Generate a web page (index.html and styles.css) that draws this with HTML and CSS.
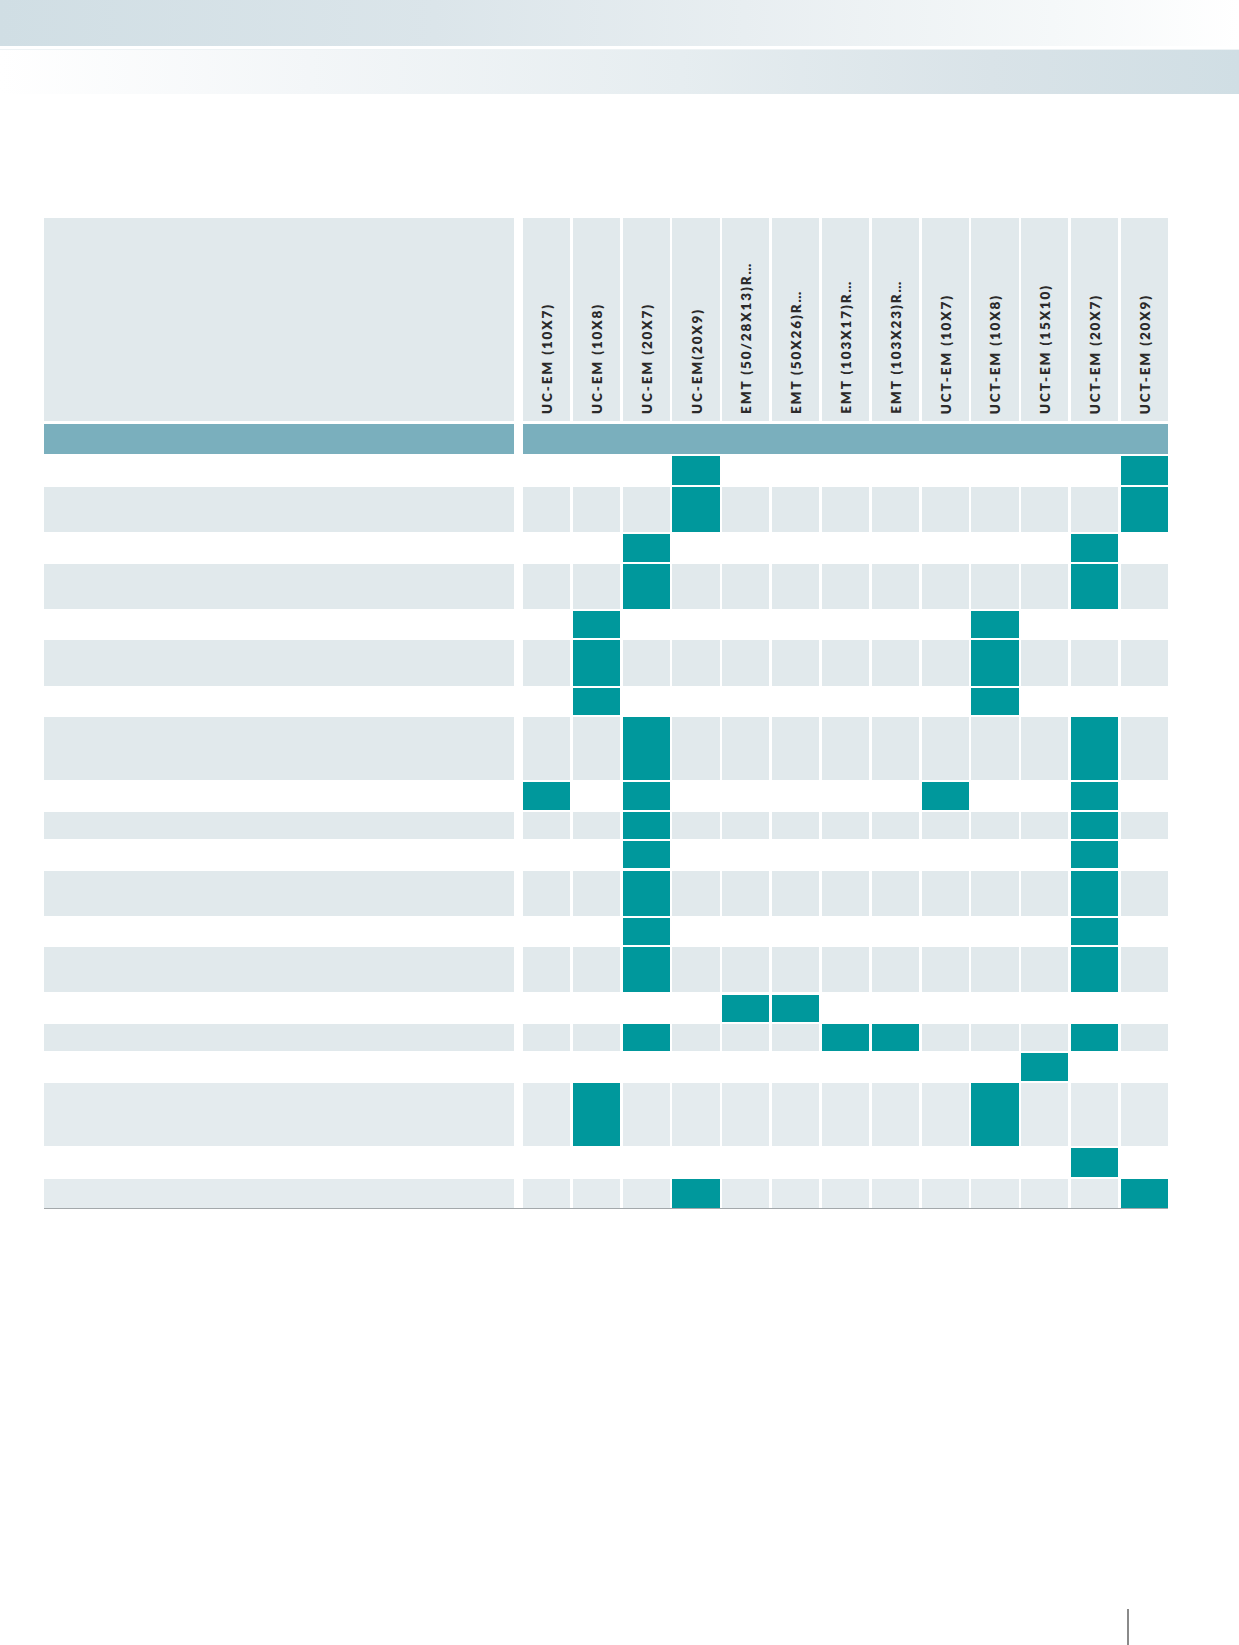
FILE: index.html
```html
<!DOCTYPE html>
<html lang="en">
<head>
<meta charset="utf-8">
<title>Matrix</title>
<link rel="stylesheet" href="styles.css">
</head>
<body>
<div class="banner">
  <div class="bar bar-a"></div>
  <div class="bar bar-b"></div>
</div>

<div class="matrix">
  <div class="row head">
    <div class="label"></div>
    <div class="cells">
      <div class="hc"><span>UC-EM (10X7)</span></div>
      <div class="hc"><span>UC-EM (10X8)</span></div>
      <div class="hc"><span>UC-EM (20X7)</span></div>
      <div class="hc"><span>UC-EM(20X9)</span></div>
      <div class="hc"><span>EMT (50/28X13)R…</span></div>
      <div class="hc"><span>EMT (50X26)R…</span></div>
      <div class="hc"><span>EMT (103X17)R…</span></div>
      <div class="hc"><span>EMT (103X23)R…</span></div>
      <div class="hc"><span>UCT-EM (10X7)</span></div>
      <div class="hc"><span>UCT-EM (10X8)</span></div>
      <div class="hc"><span>UCT-EM (15X10)</span></div>
      <div class="hc"><span>UCT-EM (20X7)</span></div>
      <div class="hc"><span>UCT-EM (20X9)</span></div>
    </div>
  </div>

  <div class="row band">
    <div class="label"></div>
    <div class="cells"></div>
  </div>

  <div class="body">
    <!-- 1 -->
    <div class="row sl">
      <div class="label"></div>
      <div class="cells"><i></i><i></i><i></i><i class="on"></i><i></i><i></i><i></i><i></i><i></i><i></i><i></i><i></i><i class="on"></i></div>
    </div>
    <!-- 2 -->
    <div class="row alt d">
      <div class="label"></div>
      <div class="cells"><i></i><i></i><i></i><i class="on"></i><i></i><i></i><i></i><i></i><i></i><i></i><i></i><i></i><i class="on"></i></div>
    </div>
    <!-- 3 -->
    <div class="row s">
      <div class="label"></div>
      <div class="cells"><i></i><i></i><i class="on"></i><i></i><i></i><i></i><i></i><i></i><i></i><i></i><i></i><i class="on"></i><i></i></div>
    </div>
    <!-- 4 -->
    <div class="row alt d">
      <div class="label"></div>
      <div class="cells"><i></i><i></i><i class="on"></i><i></i><i></i><i></i><i></i><i></i><i></i><i></i><i></i><i class="on"></i><i></i></div>
    </div>
    <!-- 5 -->
    <div class="row s">
      <div class="label"></div>
      <div class="cells"><i></i><i class="on"></i><i></i><i></i><i></i><i></i><i></i><i></i><i></i><i class="on"></i><i></i><i></i><i></i></div>
    </div>
    <!-- 6 -->
    <div class="row alt d">
      <div class="label"></div>
      <div class="cells"><i></i><i class="on"></i><i></i><i></i><i></i><i></i><i></i><i></i><i></i><i class="on"></i><i></i><i></i><i></i></div>
    </div>
    <!-- 7 -->
    <div class="row s">
      <div class="label"></div>
      <div class="cells"><i></i><i class="on"></i><i></i><i></i><i></i><i></i><i></i><i></i><i></i><i class="on"></i><i></i><i></i><i></i></div>
    </div>
    <!-- 8 -->
    <div class="row alt t">
      <div class="label"></div>
      <div class="cells"><i></i><i></i><i class="on"></i><i></i><i></i><i></i><i></i><i></i><i></i><i></i><i></i><i class="on"></i><i></i></div>
    </div>
    <!-- 9 -->
    <div class="row s">
      <div class="label"></div>
      <div class="cells"><i class="on"></i><i></i><i class="on"></i><i></i><i></i><i></i><i></i><i></i><i class="on"></i><i></i><i></i><i class="on"></i><i></i></div>
    </div>
    <!-- 10 -->
    <div class="row alt s">
      <div class="label"></div>
      <div class="cells"><i></i><i></i><i class="on"></i><i></i><i></i><i></i><i></i><i></i><i></i><i></i><i></i><i class="on"></i><i></i></div>
    </div>
    <!-- 11 -->
    <div class="row s">
      <div class="label"></div>
      <div class="cells"><i></i><i></i><i class="on"></i><i></i><i></i><i></i><i></i><i></i><i></i><i></i><i></i><i class="on"></i><i></i></div>
    </div>
    <!-- 12 -->
    <div class="row alt d">
      <div class="label"></div>
      <div class="cells"><i></i><i></i><i class="on"></i><i></i><i></i><i></i><i></i><i></i><i></i><i></i><i></i><i class="on"></i><i></i></div>
    </div>
    <!-- 13 -->
    <div class="row s">
      <div class="label"></div>
      <div class="cells"><i></i><i></i><i class="on"></i><i></i><i></i><i></i><i></i><i></i><i></i><i></i><i></i><i class="on"></i><i></i></div>
    </div>
    <!-- 14 -->
    <div class="row alt d">
      <div class="label"></div>
      <div class="cells"><i></i><i></i><i class="on"></i><i></i><i></i><i></i><i></i><i></i><i></i><i></i><i></i><i class="on"></i><i></i></div>
    </div>
    <!-- 15 -->
    <div class="row s">
      <div class="label"></div>
      <div class="cells"><i></i><i></i><i></i><i></i><i class="on"></i><i class="on"></i><i></i><i></i><i></i><i></i><i></i><i></i><i></i></div>
    </div>
    <!-- 16 -->
    <div class="row alt s">
      <div class="label"></div>
      <div class="cells"><i></i><i></i><i class="on"></i><i></i><i></i><i></i><i class="on"></i><i class="on"></i><i></i><i></i><i></i><i class="on"></i><i></i></div>
    </div>
    <!-- 17 -->
    <div class="row s">
      <div class="label"></div>
      <div class="cells"><i></i><i></i><i></i><i></i><i></i><i></i><i></i><i></i><i></i><i></i><i class="on"></i><i></i><i></i></div>
    </div>
    <!-- 18 -->
    <div class="row alt light t">
      <div class="label"></div>
      <div class="cells"><i></i><i class="on"></i><i></i><i></i><i></i><i></i><i></i><i></i><i></i><i class="on"></i><i></i><i></i><i></i></div>
    </div>
    <!-- 19 -->
    <div class="row sl">
      <div class="label"></div>
      <div class="cells"><i></i><i></i><i></i><i></i><i></i><i></i><i></i><i></i><i></i><i></i><i></i><i class="on"></i><i></i></div>
    </div>
    <!-- 20 -->
    <div class="row alt light sl">
      <div class="label"></div>
      <div class="cells"><i></i><i></i><i></i><i class="on"></i><i></i><i></i><i></i><i></i><i></i><i></i><i></i><i></i><i class="on"></i></div>
    </div>
  </div>
</div>

<div class="page-mark"></div>
</body>
</html>
```

FILE: styles.css
```css
* { box-sizing: border-box; }

html, body {
  margin: 0;
  padding: 0;
  background: #ffffff;
  font-family: Lato, "Open Sans", "DejaVu Sans", sans-serif;
}

body {
  width: 1239px;
  height: 1645px;
  overflow: hidden;
}

.banner {
  display: flex;
  flex-direction: column;
  gap: 3px;
}

.bar {
  height: 46px;
}

.bar-a {
  background: linear-gradient(to right, #d0dee4 0%, #dbe5ea 35%, #e8eef1 60%, #f5f8f9 85%, #ffffff 100%);
}

.bar-b {
  height: 45px;
  border-top: 1px solid #eef3f5;
  background: linear-gradient(to right, #ffffff 0%, #f3f6f8 25%, #e6edf0 55%, #d9e3e8 80%, #d0dee4 100%);
}

.matrix {
  margin: 124px 0 0 44px;
  width: 1124px;
  display: flex;
  flex-direction: column;
}

.row {
  display: flex;
  gap: 9px;
}

.label {
  width: 470px;
  flex: none;
}

.cells {
  width: 645px;
  flex: none;
  display: grid;
  grid-template-columns: repeat(13, 1fr);
  column-gap: 2.6px;
}

/* header */
.head {
  height: 203px;
}

.head .label {
  background: #e1e9ec;
}

.hc {
  background: #e1e9ec;
  display: flex;
  flex-direction: column;
  justify-content: flex-end;
  align-items: center;
  padding: 0 0 7px 2px;
}

.hc span {
  writing-mode: vertical-rl;
  transform: rotate(180deg);
  font-size: 13.5px;
  font-weight: 800;
  letter-spacing: 1.9px;
  color: #2a2a2a;
  white-space: nowrap;
  line-height: 15px;
}

/* band */
.band {
  height: 30px;
  margin-top: 3px;
}

.band .label,
.band .cells {
  background: #7aafbd;
}

/* body rows */
.body {
  margin-top: 2px;
  display: flex;
  flex-direction: column;
  gap: 2.15px;
  border-bottom: 1px solid #a3a8ab;
}

.s { height: 27.3px; }
.sl { height: 29px; }
.d { height: 45.1px; }
.t { height: 63px; }

.cells i {
  display: block;
}

.alt .label,
.alt .cells i {
  background: #e1e9ec;
}

.alt.light .label,
.alt.light .cells i {
  background: #e4ebee;
}

.cells i.on,
.alt .cells i.on,
.alt.light .cells i.on {
  background: #00989c;
}

.page-mark {
  margin: 400px 0 0 1127px;
  width: 2px;
  height: 40px;
  background: #8a8a8a;
}
```
